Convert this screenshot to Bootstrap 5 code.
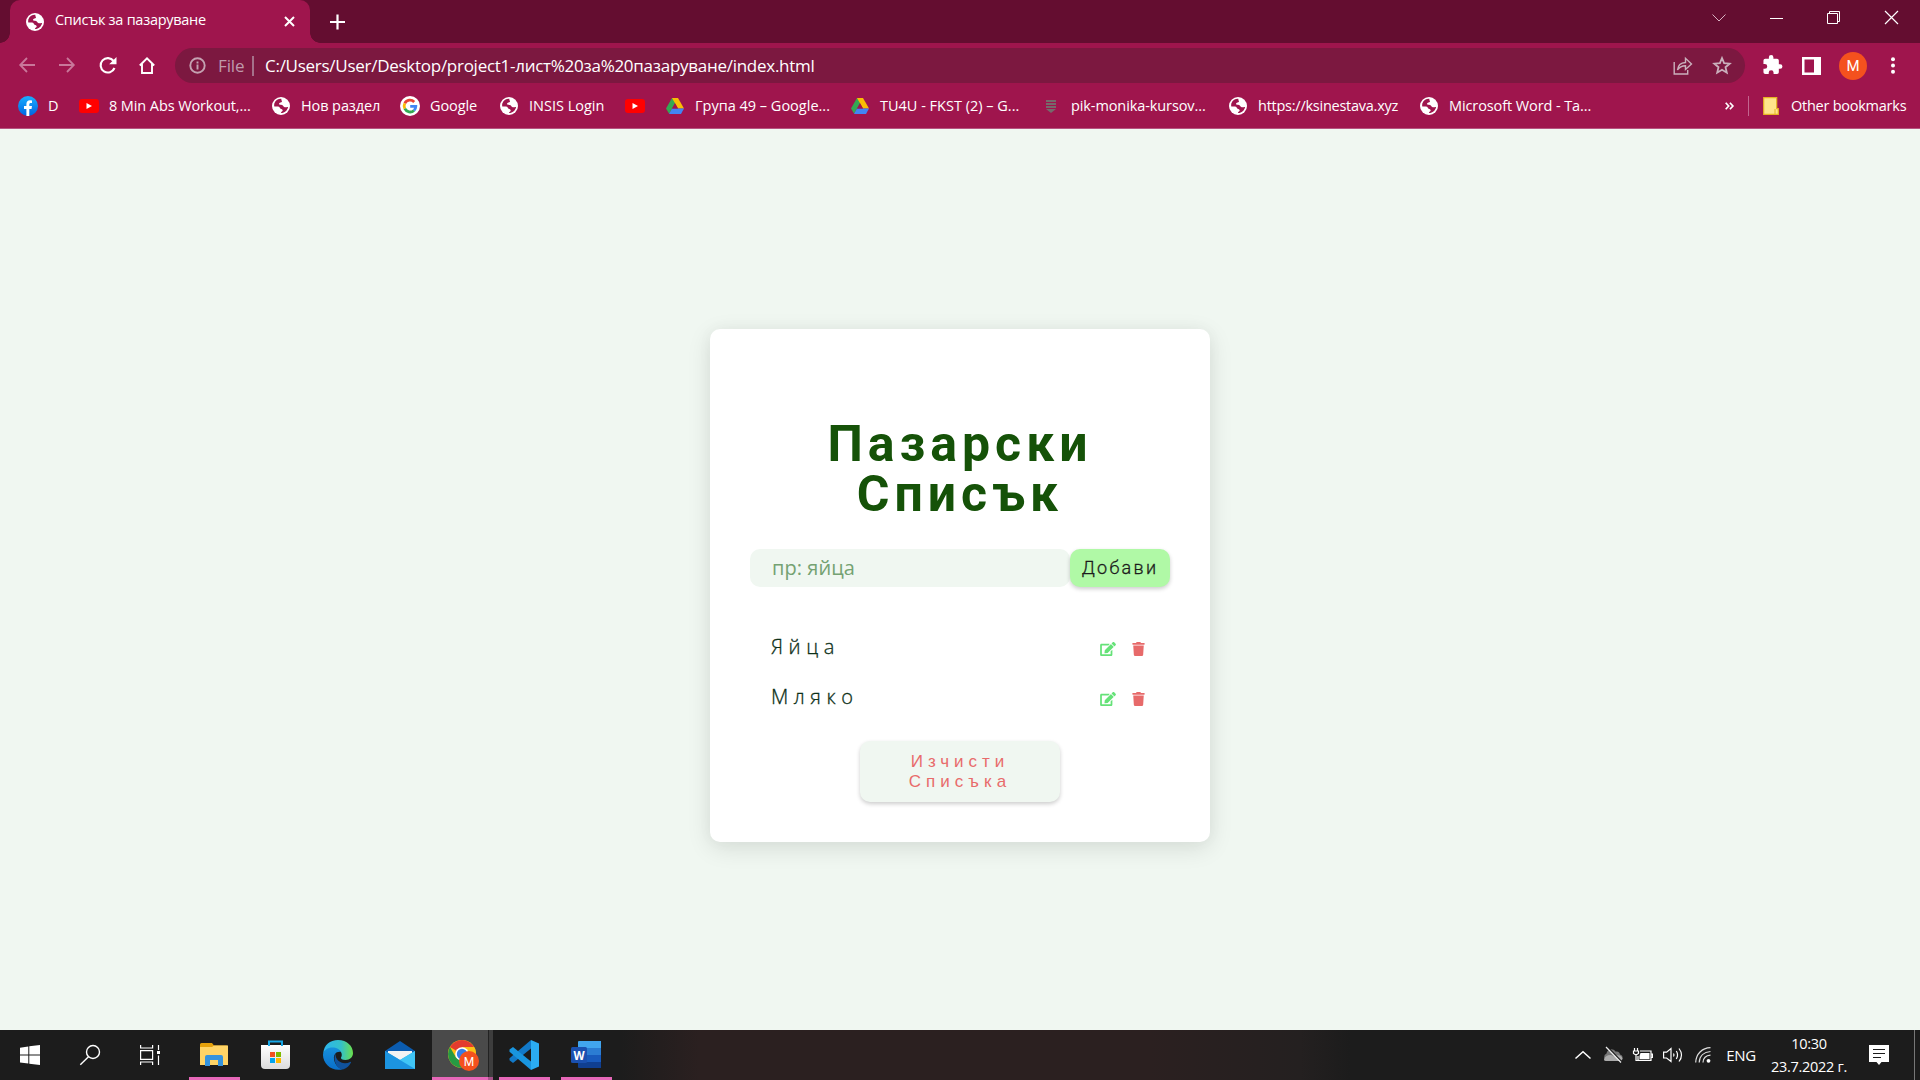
<!DOCTYPE html>
<html lang="bg">
<head>
<meta charset="utf-8">
<meta name="viewport" content="width=device-width, initial-scale=1">
<title>Списък за пазаруване</title>
<link href="https://cdn.jsdelivr.net/npm/bootstrap@5.3.0/dist/css/bootstrap.min.css" rel="stylesheet">
<style>
  body { font-family: "Open Sans", "Noto Sans", sans-serif; height: 1080px; overflow: hidden; background: #f0f7f1; color: #fff; }
  svg { display: block; flex: none; overflow: visible; }
  .tabstrip { height: 43px; background: #640d30; padding-left: 10px; }
  .tab { width: 300px; height: 43px; background: #9f154d; border-radius: 10px 10px 0 0; padding: 0 15px 0 15px; font-size: 14.5px; }
  .tab::before, .tab::after { content: ""; position: absolute; bottom: 0; width: 10px; height: 10px; }
  .tab::before { left: -10px; background: radial-gradient(circle at 0 0, #640d30 9.5px, #9f154d 10px); }
  .tab::after { right: -10px; background: radial-gradient(circle at 100% 0, #640d30 9.5px, #9f154d 10px); }
  .tabname { letter-spacing: -.27px; margin-left: 10px; padding-bottom: 3px; }
  .winctl > div { width: 57.5px; display: flex; justify-content: center; }
  .toolbar { height: 45px; background: #9f154d; }
  .nav-group { padding-left: 7px; }
  .navbtn { width: 40px; display: flex; justify-content: center; }
  .omni { width: 1570px; height: 35px; background: #7c1840; border-radius: 18px; padding-left: 14px; font-size: 17px; }
  .omni .scheme { color: #bf9aab; width: 35px; letter-spacing: -.1px; margin-left: 12px; }
  .omni .bar { width: 2px; height: 20px; background: #a5718a; margin-left: -1px; margin-right: 11px; }
  .omni .url { letter-spacing: -.27px; }
  .omshare { margin-right: 20px; }
  .omstar { margin-right: 14px; }
  .tools { width: 175px; padding-left: 18px; gap: 20px; }
  .tools .avatar { margin-left: -2px; margin-right: 4px; }
  .avatar { width: 28px; height: 28px; background: #f4511e; font: 15px Roboto, sans-serif; }
  .bookmarks { height: 41px; background: #9f154d; border-bottom: 1px solid #b65480; padding-left: 18px; font-size: 14.5px; letter-spacing: -.1px; }
  .bm { gap: 10px; height: 36px; white-space: nowrap; }
  .slot { width: 20px; display: flex; justify-content: center; flex: none; }
  .w61 { width: 61px } .w192 { width: 192px } .w129 { width: 129px } .w99 { width: 99px } .w126 { width: 126px } .w40 { width: 40px }
  .w185 { width: 185px } .w191 { width: 191px } .w187 { width: 187px } .w190 { width: 190px }
  .tight { letter-spacing: -.25px; }
  .loose { letter-spacing: 0; }
  .other { width: 195px; }
  .otherlabel { margin-left: 2px; letter-spacing: -.25px; }
  .viewport { height: 901px; padding-top: 200px; }
  .panel { width: 500px; height: 513px; background: #fff; border-radius: 10px; padding: 90px 40px 0; box-shadow: 0 6px 24px rgba(0,20,10,.11), 0 0 16px rgba(0,20,10,.03); }
  .panel h1 { font: 700 50px/50px Roboto, sans-serif; letter-spacing: 5px; color: #155208; margin: 0 0 30px; }
  .field { width: 320px; height: 38px; border: 0; border-radius: 10px; background: #f0f7f1; padding: 0 22px 2px; font-size: 20px; outline: 0; }
  .field::placeholder { color: #74a272; letter-spacing: .05px; opacity: 1; }
  .add { width: 100px; height: 38px; border: 0; border-radius: 10px; background: #b0f9a6; color: #1c1c1c; font: 300 18px Roboto, sans-serif; -webkit-text-stroke: .3px #1c1c1c; letter-spacing: 2.3px; padding: 0 0 1px; box-shadow: 0 2px 4px rgba(0,0,0,.2); }
  .items { margin-top: 35px; }
  .entry { height: 50px; padding: 0 25px 0 21px; font-size: 20px; font-weight: 300; -webkit-text-stroke: .3px #0d3018; letter-spacing: 5.6px; color: #0d3018; }
  .entry svg { margin-top: 4px; }
  .clear { width: 200px; height: 61px; margin-top: 19px; border: 0; border-radius: 10px; background: #f0f7f1; color: #e86b6b; font: 17px/20px "Liberation Sans", Arial, sans-serif; letter-spacing: 5px; padding: 0 40px; box-shadow: 0 2px 4px rgba(0,0,0,.2); }
  .taskbar { height: 50px; background: linear-gradient(90deg, #1c1c1c 620px, #2b2020 700px, #2b2020 1150px, #242020 1300px, #1c1c1c 1350px); }
  .sys { width: 60px; height: 50px; display: flex; align-items: center; justify-content: center; }
  .app { width: 62px; height: 50px; display: flex; align-items: center; justify-content: center; }
  .app.plain { padding-right: 3px; }
  .open { padding-right: 2px; }
  .open::after { content: ""; position: absolute; left: 5px; bottom: 0; width: 51px; height: 3px; background: #e667b8; }
  .active { width: 62px; padding-right: 0; background: linear-gradient(90deg, #4a4a4a 56px, #222 56px, #222 57px, #3d3d3d 57px, #3d3d3d 61px, #1c1c1c 61px); }
  .active::after { left: 0; width: 61px; background: linear-gradient(90deg, #e667b8 56px, #a8528a 56px); }
  .tray { width: 30px; display: flex; justify-content: center; }
  .lang { width: 46px; font-size: 15px; letter-spacing: -.4px; text-align: center; }
  .clock { width: 90px; font-size: 14.5px; line-height: 23px; letter-spacing: -.3px; text-align: center; }
  .notice { width: 50px; display: flex; justify-content: center; }
  .peek { width: 1px; height: 50px; background: #777; margin: 0 5px 0 10px; }
</style>
</head>
<body class="d-flex flex-column m-0">
<svg width="0" height="0" class="position-absolute">
  <symbol id="globe" viewBox="0 0 18 18"><circle cx="9" cy="9" r="9" fill="#fff"/><path d="M9.5 1.900C7 1.600 3.500 3 2.300 6.500c-.3 1.200-.2 2.200 0 3 .9.300 3-.1 4.500.2 1 .2 1 1.500 1.800 2.100.8.500 2 .5 2.100 1.500.1 1-1.500 1.400-1.800 2.700 3.500.2 6.600-2.500 7.200-6-1-.3-2.100.5-3.400.2C11.300 9.800 11.400 8.500 10 8 8.800 7.600 7 8 7 6.700 7 5.500 9.800 5.800 10 4.600c.1-1-.9-1.500-.5-2.700z" fill="#9f154d"/><path d="M9.800 2.500c2 .7 1.200 2.900.6 3.500 1.500.4 2.600 1 3.600 2.300" fill="none" stroke="#fff" stroke-width="1.200"/></symbol>
  <symbol id="yt" viewBox="0 0 20 14"><rect width="20" height="14" rx="3" fill="#f00"/><path d="M7.500 4v6l5.500-3z" fill="#fff"/></symbol>
  <symbol id="drive" viewBox="0 0 18 16"><path d="M6 0h6L9 5.200 3.100 15.800 0 10.600z" fill="#34a853"/><path d="M6 0h6l6 10.600h-6z" fill="#fbbc04"/><path d="M6 10.600h12L15 16H3z" fill="#4285f4"/><path d="M9 5.200l3 5.400H6z" fill="#9f154d"/></symbol>
  <symbol id="edit" viewBox="0 0 576 512"><path fill="#65e278" d="M402.600 83.200l90.200 90.200c3.800 3.800 3.800 10 0 13.800L274.400 405.600l-92.800 10.300c-12.400 1.400-22.900-9.100-21.500-21.500l10.300-92.800L388.800 83.200c3.800-3.800 10-3.800 13.800 0zm162-22.900l-48.800-48.800c-15.200-15.200-39.900-15.200-55.200 0l-35.400 35.400c-3.800 3.800-3.800 10 0 13.800l90.200 90.200c3.800 3.800 10 3.800 13.800 0l35.400-35.400c15.200-15.300 15.200-40 0-55.200zM384 346.200V448H64V128h229.800c3.200 0 6.200-1.300 8.500-3.500l40-40c7.600-7.600 2.200-20.500-8.500-20.500H48C21.500 64 0 85.500 0 112v352c0 26.500 21.500 48 48 48h352c26.500 0 48-21.500 48-48V306.200c0-10.700-12.900-16-20.500-8.500l-40 40c-2.200 2.300-3.500 5.300-3.500 8.500z"/></symbol>
  <symbol id="trash" viewBox="0 0 448 512"><path fill="#e76a6a" d="M432 32H312l-9.400-18.700A24 24 0 0 0 281.100 0H166.800a23.700 23.700 0 0 0-21.400 13.300L136 32H16A16 16 0 0 0 0 48v32a16 16 0 0 0 16 16h416a16 16 0 0 0 16-16V48a16 16 0 0 0-16-16zM53.200 467a48 48 0 0 0 47.900 45h245.800a48 48 0 0 0 47.900-45L416 128H32z"/></symbol>
</svg>

<header>
  <div class="tabstrip d-flex align-items-center">
    <div class="tab position-relative d-flex align-items-center">
      <svg width="20" height="18"><use href="#globe"/></svg>
      <span class="flex-grow-1 tabname">Списък за пазаруване</span>
      <svg width="11" height="11" stroke="#fff" stroke-width="2"><path d="M1 1l9 9M10 1L1 10"/></svg>
    </div>
    <svg class="ms-3" width="24" height="16" stroke="#fff" stroke-width="2.200"><path d="M4 8h15M11.500 .5v15"/></svg>
    <div class="winctl d-flex align-items-center ms-auto pb-2">
      <div><svg width="14" height="8" stroke="#d8b3c3" fill="none"><path d="M.5.500L7 7 13.500.500"/></svg></div>
      <div><svg width="13" height="2"><path d="M0 1.500h13" stroke="#fff"/></svg></div>
      <div><svg width="13" height="13" stroke="#fff" fill="none"><path d="M.5 2.500h10v10H.5zM2.500 2.500v-2h10v10h-2"/></svg></div>
      <div><svg width="13" height="13" stroke="#fff" stroke-width="1.200"><path d="M0 0l13 13M13 0L0 13"/></svg></div>
    </div>
  </div>

  <div class="toolbar d-flex align-items-center">
    <div class="nav-group d-flex">
      <div class="navbtn"><svg width="16" height="16" fill="none" stroke="#c9779a" stroke-width="1.800"><path d="M16 8H1.500M8 1L1.200 8 8 15"/></svg></div>
      <div class="navbtn"><svg width="16" height="16" fill="none" stroke="#c9779a" stroke-width="1.800"><path d="M0 8h14.500M8 1l6.800 7L8 15"/></svg></div>
      <div class="navbtn"><svg width="17" height="17" fill="none" stroke="#fff" stroke-width="2.100"><path d="M14.600 4A7.200 7.200 0 1 0 15.500 11"/><path d="M17.500 0v7.300h-7.300z" fill="#fff" stroke="none"/></svg></div>
      <div class="navbtn"><svg width="16" height="17" fill="none" stroke="#fff" stroke-width="1.900"><path d="M.8 8.500L8 1.300l7.200 7.200M3 7v9h10V7"/></svg></div>
    </div>
    <div class="omni ms-auto d-flex align-items-center">
      <svg width="17" height="17" fill="none" stroke="#c4a2b1" stroke-width="1.900"><circle cx="8.500" cy="8.500" r="7.200"/><path d="M8.500 7.500v5M8.500 4.400v2"/></svg>
      <span class="scheme">File</span><span class="bar"></span><span class="url">C:/Users/User/Desktop/project1-лист%20за%20пазаруване/index.html</span>
      <svg class="ms-auto omshare" width="20" height="18" fill="none" stroke="#cab0bc" stroke-width="1.400"><path d="M1.200 5v12h13.500v-4"/><path d="M4.500 13c.5-5 3.500-7.300 8-7.500V1.300l6 5.700-6 5.500V8.800c-3.500 0-6 1-8 4.200z"/></svg>
      <svg class="omstar" width="18" height="17" fill="none" stroke="#cab0bc" stroke-width="1.800"><path d="M9 1l2.100 5.100 5.600.5-4.200 3.600 1.300 5.500L9 12.800l-4.800 2.900 1.300-5.500-4.200-3.600 5.600-.5z"/></svg>
    </div>
    <div class="tools d-flex align-items-center">
      <svg width="19" height="19" viewBox="1.500 2 21 21" fill="#fff"><path d="M20.500 11H19V7a2 2 0 0 0-2-2h-4V3.500a2.500 2.500 0 0 0-5 0V5H4a2 2 0 0 0-2 2v3.800h1.500a2.700 2.700 0 0 1 0 5.400H2V20a2 2 0 0 0 2 2h3.800v-1.500a2.700 2.700 0 0 1 5.400 0V22H17a2 2 0 0 0 2-2v-4h1.500a2.500 2.500 0 0 0 0-5z"/></svg>
      <svg width="19" height="18" fill="none" stroke="#fff" stroke-width="2.500"><path d="M1.250 1.250h16.500v15.500H1.250z"/><path d="M12 1h6v16h-6z" fill="#fff" stroke="none"/></svg>
      <span class="avatar rounded-circle d-flex align-items-center justify-content-center">M</span>
      <svg width="4" height="17" fill="#fff"><circle cx="2" cy="2.300" r="2"/><circle cx="2" cy="8.500" r="2"/><circle cx="2" cy="14.700" r="2"/></svg>
    </div>
  </div>

  <nav class="bookmarks d-flex">
    <div class="bm w61 d-flex align-items-center"><span class="slot"><svg width="20" height="20"><defs><linearGradient id="fb" x2="0" y2="1"><stop stop-color="#19afff"/><stop offset="1" stop-color="#0062e0"/></linearGradient></defs><circle cx="10" cy="10" r="10" fill="url(#fb)"/><path d="M8.400 20v-7H6v-3h2.400V8c0-2.500 1.400-3.800 3.600-3.800l2 .2v2.500h-1.200c-1.100 0-1.500.7-1.500 1.400V10H14l-.5 3h-2.200v7z" fill="#fff"/></svg></span>D</div>
    <div class="bm w192 d-flex align-items-center"><span class="slot"><svg width="20" height="14"><use href="#yt"/></svg></span>8 Min Abs Workout,...</div>
    <div class="bm w129 d-flex align-items-center"><span class="slot"><svg width="18" height="18"><use href="#globe"/></svg></span>Нов раздел</div>
    <div class="bm w99 d-flex align-items-center"><span class="slot"><svg width="20" height="20"><circle cx="10" cy="10" r="10" fill="#fff"/><g fill="none" stroke-width="2.800"><path d="M14.200 6A5.800 5.800 0 0 0 4.800 7.300" stroke="#ea4335"/><path d="M4.800 7.300a5.800 5.800 0 0 0 0 5.400" stroke="#fbbc05"/><path d="M4.800 12.700a5.800 5.800 0 0 0 9.200 1.700" stroke="#34a853"/><path d="M14 14.400a5.800 5.800 0 0 0 1.800-4H10.200" stroke="#4285f4"/></g></svg></span>Google</div>
    <div class="bm w126 loose d-flex align-items-center"><span class="slot"><svg width="18" height="18"><use href="#globe"/></svg></span>INSIS Login</div>
    <div class="bm w40 d-flex align-items-center"><span class="slot"><svg width="20" height="14"><use href="#yt"/></svg></span></div>
    <div class="bm w185 loose d-flex align-items-center"><span class="slot"><svg width="18" height="16"><use href="#drive"/></svg></span>Група 49 – Google...</div>
    <div class="bm w191 loose d-flex align-items-center"><span class="slot"><svg width="18" height="16"><use href="#drive"/></svg></span>TU4U - FKST (2) – G...</div>
    <div class="bm w187 d-flex align-items-center"><span class="slot"><svg width="10" height="13" fill="#76696b"><path d="M0 0h10v2H0zM0 3h10v2H0zM0 6h10v2H0zM0 9h10L5 13z"/></svg></span>pik-monika-kursov...</div>
    <div class="bm w191 tight d-flex align-items-center"><span class="slot"><svg width="18" height="18"><use href="#globe"/></svg></span>https://ksinestava.xyz</div>
    <div class="bm w190 d-flex align-items-center"><span class="slot"><svg width="18" height="18"><use href="#globe"/></svg></span>Microsoft Word - Ta...</div>
    <div class="bm other d-flex align-items-center ms-auto">
      <svg width="9" height="8" fill="none" stroke="#fff" stroke-width="1.700"><path d="M.7.700L3.700 4l-3 3.300M4.900.7L7.900 4l-3 3.300"/></svg>
      <svg class="ms-1" width="1" height="20"><path d="M.5 0v20" stroke="#c2668f"/></svg>
      <svg class="ms-1" width="16" height="18"><path d="M.7.700h13v11h1.600v5.600H.7z" fill="#ffe48b" stroke="#e6b422" stroke-width="1.200"/><path d="M12 12v5" stroke="#e6b422"/></svg>
      <span class="otherlabel">Other bookmarks</span>
    </div>
  </nav>
</header>

<main class="viewport d-flex justify-content-center align-items-start">
  <section class="panel d-flex flex-column">
    <h1 class="text-center">Пазарски Списък</h1>
    <form class="d-flex">
      <input class="field" type="text" placeholder="пр: яйца">
      <button class="add" type="button">Добави</button>
    </form>
    <div class="items">
      <div class="entry d-flex align-items-center"><span class="flex-grow-1">Яйца</span><svg width="16" height="14"><use href="#edit"/></svg><svg class="ms-3" width="13" height="14"><use href="#trash"/></svg></div>
      <div class="entry d-flex align-items-center"><span class="flex-grow-1">Мляко</span><svg width="16" height="14"><use href="#edit"/></svg><svg class="ms-3" width="13" height="14"><use href="#trash"/></svg></div>
    </div>
    <button class="clear align-self-center" type="button">Изчисти Списъка</button>
  </section>
</main>

<footer class="taskbar d-flex align-items-center">
  <div class="sys"><svg width="20" height="20" fill="#fff"><path d="M0 2.800L8.300 1.500v8H0zM9.300 1.300L20 0v9.500H9.300zM0 10.500h8.300v8.100L0 17.400zM9.300 10.500H20V20L9.300 18.700z"/></svg></div>
  <div class="sys"><svg width="20" height="20" fill="none" stroke="#fff" stroke-width="1.400"><circle cx="13" cy="7" r="6.500"/><path d="M8.500 11.700L.3 19.700"/></svg></div>
  <div class="sys me-1"><svg width="20" height="20" fill="none" stroke="#fff" stroke-width="1.200"><path d="M.6 0v3h12V0M.6 20v-3h12v3M.6 5.600h12v8.800H.6zM18.500 0v5M18.500 10.500V20"/><path d="M17 6h3v3h-3z" fill="#fff" stroke="none"/></svg></div>
  <div class="app open position-relative"><svg width="28" height="24"><path d="M0 1.500Q0 0 1.500 0H12l2 2.500h12.500Q28 2.500 28 4v18H0z" fill="#e5a10b"/><path d="M0 4h12l2-1.500h14V22H0z" fill="#ffd466"/><path d="M5 23V14q0-2 2-2h14q2 0 2 2v9h-5v-6h-8v6z" fill="#3593dd"/></svg></div>
  <div class="app plain"><svg width="29" height="30"><defs><linearGradient id="st" x2="0" y2="1"><stop stop-color="#fff"/><stop offset="1" stop-color="#dcdcdc"/></linearGradient></defs><path d="M0 5h29v20q0 4-4 4H4q-4 0-4-4z" fill="url(#st)"/><path d="M8 6V1.500h13V6" fill="none" stroke="#17a8e8" stroke-width="2"/><path d="M9 12h5v5H9z" fill="#f25022"/><path d="M15 12h5v5h-5z" fill="#7fba00"/><path d="M9 18h5v5H9z" fill="#00a4ef"/><path d="M15 18h5v5h-5z" fill="#ffb900"/></svg></div>
  <div class="app plain"><svg width="30" height="30"><defs><linearGradient id="eg"><stop stop-color="#2cb5ef"/><stop offset=".6" stop-color="#34c1c9"/><stop offset="1" stop-color="#6be04b"/></linearGradient><linearGradient id="eb" x2="0" y2="1"><stop stop-color="#1690dc"/><stop offset="1" stop-color="#0a6fca"/></linearGradient></defs><path d="M.3 13C1 5 7 0 15 0c9 0 15 6 15 13 0 4-3 7-7.500 7-3.500 0-5-1.500-4.500-2.500 1.500-2 1-6-2.500-7.500C11 8 4 8.500.3 13z" fill="url(#eg)"/><path d="M0 15C0 10 5 7.500 9.500 7.500c4 0 7.500 2 8.500 4.500-5-1-7.500 3-7 7 .5 5 4 9 8.500 10.300C9 32 0 24 0 15z" fill="url(#eb)"/><path d="M12.500 13.500C9.500 20 14 29.500 20 29.500c4-1.300 6.500-4 8-7 .2-.7-.3-.9-.8-.6C20 25.500 12 21 12.500 13.500z" fill="#10529c"/></svg></div>
  <div class="app plain"><svg width="30" height="28"><path d="M0 10L15 0l15 10v3H0z" fill="#0b5cb0"/><path d="M3 10h24v5L15 20 3 15z" fill="#f3f3f3"/><path d="M0 10l15 9 15-9v18H0z" fill="#2ba9ea"/><path d="M0 28h30V10L15 19z" fill="#40c5f5"/><path d="M0 10l30 18H0z" fill="#1c94e0"/></svg></div>
  <div class="app open active position-relative"><svg width="30" height="30"><circle cx="14" cy="14" r="14" fill="#fbc116"/><path d="M14 14L1.900 7A14 14 0 0 1 26.100 7z" fill="#e33b2e"/><path d="M14 14V7h12.100A14 14 0 0 1 28 14z" fill="#fbc116"/><path d="M1.900 7A14 14 0 0 0 14 28l6-10.500H8z" fill="#269a43"/><circle cx="14" cy="14" r="6.800" fill="#fff"/><circle cx="14" cy="14" r="5.200" fill="#347fe8"/><circle cx="21" cy="21" r="10" fill="#f4511e"/><text x="21" y="25.500" text-anchor="middle" font-family="Roboto" font-size="12" fill="#fff">M</text></svg></div>
  <div class="app open position-relative"><svg width="30" height="30"><path d="M22 0l8 3.500v23L22 30z" fill="#2bacf2"/><path d="M22 0v8.500L4 23l-3.500-2.800v-2z" fill="#1279c8"/><path d="M22 30v-8.500L4 7 .5 9.500v2.300z" fill="#1995df"/></svg></div>
  <div class="app open position-relative"><svg width="30" height="28"><path d="M7 1q0-1 1-1h22v7H7z" fill="#41a5ee"/><path d="M7 7h23v7H7z" fill="#2b7cd3"/><path d="M7 14h23v7H7z" fill="#185abd"/><path d="M7 21h23v6H8q-1 0-1-1z" fill="#103f91"/><rect y="6" width="16" height="16" rx="1.500" fill="#1a50b0"/><text x="8" y="18.500" text-anchor="middle" font-family="Open Sans" font-weight="700" font-size="11.500" fill="#fff">W</text></svg></div>

  <div class="d-flex align-items-center ms-auto">
    <div class="tray"><svg width="16" height="8" fill="none" stroke="#fff" stroke-width="1.500"><path d="M.5 7.500L8 .7l7.500 6.800"/></svg></div>
    <div class="tray"><svg width="20" height="16"><path d="M4 14a4 4 0 0 1-.5-7.500C4 2 10 .5 12.500 4.500 16 4 17 6.500 17 7.500a3.300 3.300 0 0 1-.5 6.500z" fill="#777"/><path d="M1 12.500C2 8 8 6.500 11 9.500c4-2.500 8-.5 8.500 2-.2 1.700-1.500 2.500-3 2.500H3Q1 14 1 12.500z" fill="#aaa"/><path d="M4.500 0l15 15.500" stroke="#1c1c1c" stroke-width="1.500"/><path d="M3 0l15 15.500" stroke="#eee" stroke-width="1.200"/></svg></div>
    <div class="tray"><svg width="20" height="14" fill="none" stroke="#fff" stroke-width="1.200"><path d="M7 3h11v9.400H5V8M18.400 6h1v3.500h-1"/><path d="M7.500 5h9v6h-10V8z" fill="#fff" stroke="none"/><path d="M1.500 0v3M4.500 0v3M.5 3h5v2.500l-1.500 1H2L.5 5.500zM3 7v5.500h3"/></svg></div>
    <div class="tray"><svg width="20" height="16" fill="none" stroke="#fff" stroke-width="1.200"><path d="M.6 5.200h3L8 1.500v13L3.600 11H.6zM10.500 6.500q1 1.500 0 3M13.300 4q2.500 4 0 8M16 1.500q5 6.500 0 13"/></svg></div>
    <div class="tray"><svg width="16" height="16" fill="none" stroke="#ddd" stroke-width="1.200"><path d="M.7 15.500C1 7 7 1 15.500.7M4.200 15.500C4.500 9 9 5 15.500 4.500M8 15.500c.2-4 3-7 7.500-7.300"/><circle cx="13.500" cy="13.800" r="1.900" fill="#fff" stroke="none"/></svg></div>
    <div class="lang">ENG</div>
    <div class="clock">10:30<br>23.7.2022 г.</div>
    <div class="notice"><svg width="20" height="20"><path d="M0 0h20v17h-7.500L10 20l-2.500-3H0z" fill="#fff"/><path d="M4 4.500h12M4 8.500h12M4 12.500h8" stroke="#1c1c1c" stroke-width="1.200"/></svg></div>
    <div class="peek"></div>
  </div>
</footer>
<script src="https://cdn.jsdelivr.net/npm/bootstrap@5.3.0/dist/js/bootstrap.bundle.min.js"></script>
</body>
</html>
